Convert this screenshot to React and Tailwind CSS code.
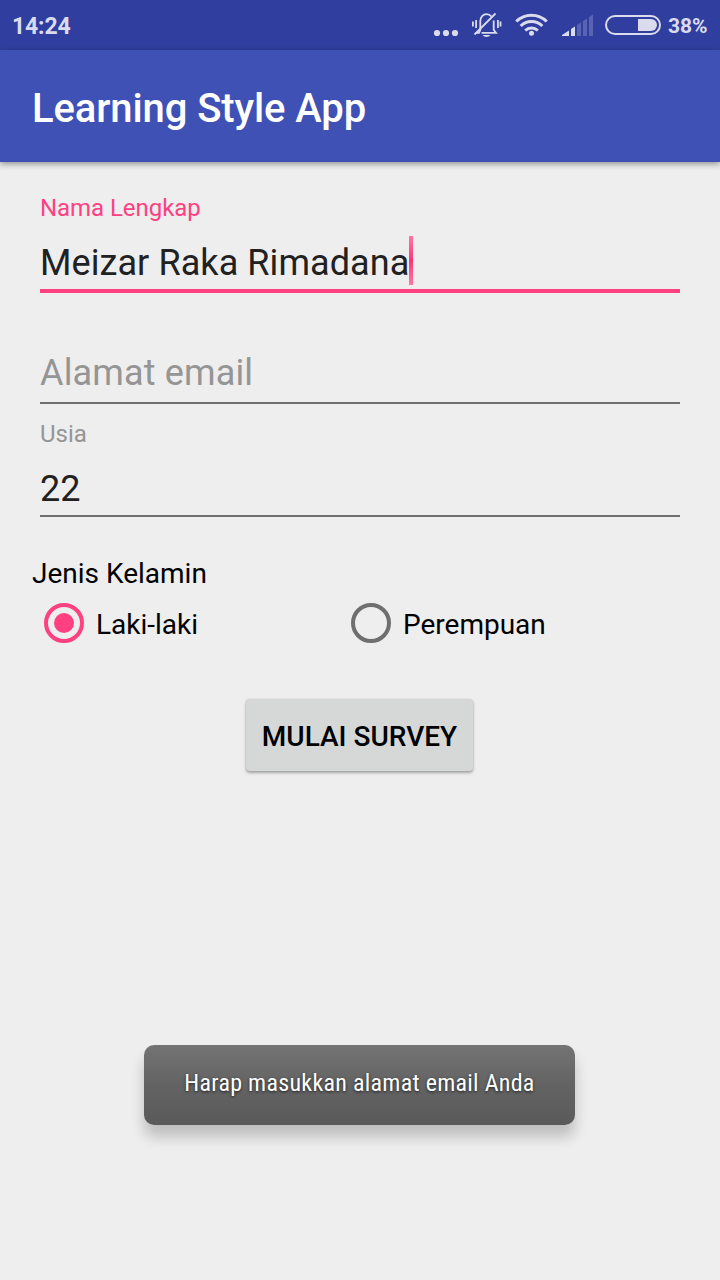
function StatusBar() {
  return (
    <header className="flex h-[50px] items-center bg-[#303f9f] pl-3 text-[#dadcee]">
      <span className="pt-[3px] text-[23px] font-bold leading-7 tracking-[-0.15px]">14:24</span>
      <svg className="ml-auto" width="295" height="50" viewBox="425 0 295 50" fill="none">
        <g fill="#dadcee">
          <circle cx="437" cy="33" r="3.1" />
          <circle cx="446" cy="33" r="3.1" />
          <circle cx="455" cy="33" r="3.1" />
        </g>
        <g stroke="#dadcee" strokeWidth="1.8">
          <path d="M475.500 32.800h3.500l1.300-3V21.500c0-4.500 2.700-7.300 6.200-7.300 2 0 3.800.8 4.900 2.300" />
          <path d="M493.700 20.500v9.300l2.300 3h-14.500" />
          <path d="M474.500 34.500 495.500 13.500" />
          <path d="M472.900 21.500v5M476.100 20v8M497.900 20v8M500.500 21.500v5" />
        </g>
        <path d="M482.500 35h8q-1.500 2-4 2t-4-2z" fill="#dadcee" />
        <g stroke="#dadcee" strokeWidth="3">
          <path d="M516.300 21.500a21.500 21.500 0 0 1 30.400 0" />
          <path d="M520.700 26a15.200 15.200 0 0 1 21.600 0" />
          <path d="M525.200 30.500a9 9 0 0 1 12.600 0" />
        </g>
        <circle cx="531.500" cy="33.300" r="2.500" fill="#dadcee" />
        <path d="M562 36v-1l7-4.500V36zM571 36v-7l4-2.500V36z" fill="#dadcee" />
        <path d="M577 36V25l4-2.500V36zM583 36V21l4-2.500V36zM589 36V17l4-2.500V36z" fill="#5864b2" />
        <rect x="606" y="16" width="54" height="18" rx="9" stroke="#dadcee" strokeWidth="2" />
        <path d="M638 19h13a6 6 0 0 1 0 12h-13z" fill="#dadcee" />
        <text x="668" y="33" fontSize="21" fontWeight="700" fill="#dadcee">38%</text>
      </svg>
    </header>
  );
}

function RadioOption({ label, checked }) {
  return (
    <label className="flex h-10 w-[307px] items-center gap-3">
      <span
        className={
          checked
            ? "flex size-10 items-center justify-center rounded-full border-4 border-[#ff4081]"
            : "flex size-10 items-center justify-center rounded-full border-4 border-[#6f6f6f]"
        }
      >
        {checked && <span className="size-5 rounded-full bg-[#ff4081]" />}
      </span>
      <span className="pt-[3px] text-[28px] leading-[34px] text-black">{label}</span>
    </label>
  );
}

export default function App() {
  return (
    <div className="flex h-[1280px] w-[720px] flex-col overflow-hidden whitespace-nowrap bg-[#eeeeee] font-['Roboto',sans-serif]">
      <StatusBar />
      <div className="flex h-28 items-center bg-[#3f51b5] px-8 pt-[6px] shadow-[0_2px_6px_rgba(0,0,0,0.4)]">
        <h1 className="text-[40px] font-medium leading-[48px] tracking-[-0.1px] text-white">Learning Style App</h1>
      </div>

      <main className="flex flex-col px-8">
        <section className="flex flex-col px-2">
          <div className="mt-8 text-[24px] leading-7 tracking-[-0.05px] text-[#ff4081]">Nama Lengkap</div>
          <div className="mt-[14px] flex h-[49px] items-center">
            <span className="w-[369px] pt-1 text-[36px] leading-[44px] tracking-[0.08px] text-[#212121]">Meizar Raka Rimadana</span>
            <span className="h-[49px] w-1 bg-linear-to-b from-[#ff75a4] via-[#ff2f76] to-[#ff75a4]" />
          </div>
          <div className="mt-1 h-1 bg-[#ff4081]" />

          <div className="mt-[58px] text-[36px] leading-[44px] tracking-[0.15px] text-[#959595]">Alamat email</div>
          <div className="mt-[7px] h-0.5 bg-[#6f6f6f]" />

          <div className="mt-4 text-[24px] leading-7 text-[#959595]">Usia</div>
          <div className="mt-[19px] text-[36px] leading-[44px] text-[#212121]">22</div>
          <div className="mt-1 h-0.5 bg-[#6f6f6f]" />
        </section>

        <div className="mt-10 text-[28px] leading-[34px] text-black">Jenis Kelamin</div>
        <div className="mt-3 flex pl-3">
          <RadioOption label="Laki-laki" checked />
          <RadioOption label="Perempuan" />
        </div>

        <button className="ml-[214px] mt-14 h-[72px] w-[227px] rounded bg-[#d6d8d7] pt-[4px] text-[28px] font-medium text-black shadow-[0_2px_3px_rgba(0,0,0,0.3),0_0_2px_rgba(0,0,0,0.12)]">
          MULAI SURVEY
        </button>
      </main>

      <div className="ml-36 mt-[274px] flex h-20 w-[431px] justify-center rounded-[10px] bg-linear-to-b from-[#747474] via-[#636363] to-[#5a5a5a] pt-6 font-['Roboto_Condensed','Roboto',sans-serif] text-[24px] leading-7 tracking-[0.28px] text-white shadow-[0_12px_14px_rgba(0,0,0,0.2)] [text-shadow:0_1px_3px_rgba(0,0,0,0.7)]">
        Harap masukkan alamat email Anda
      </div>
    </div>
  );
}
